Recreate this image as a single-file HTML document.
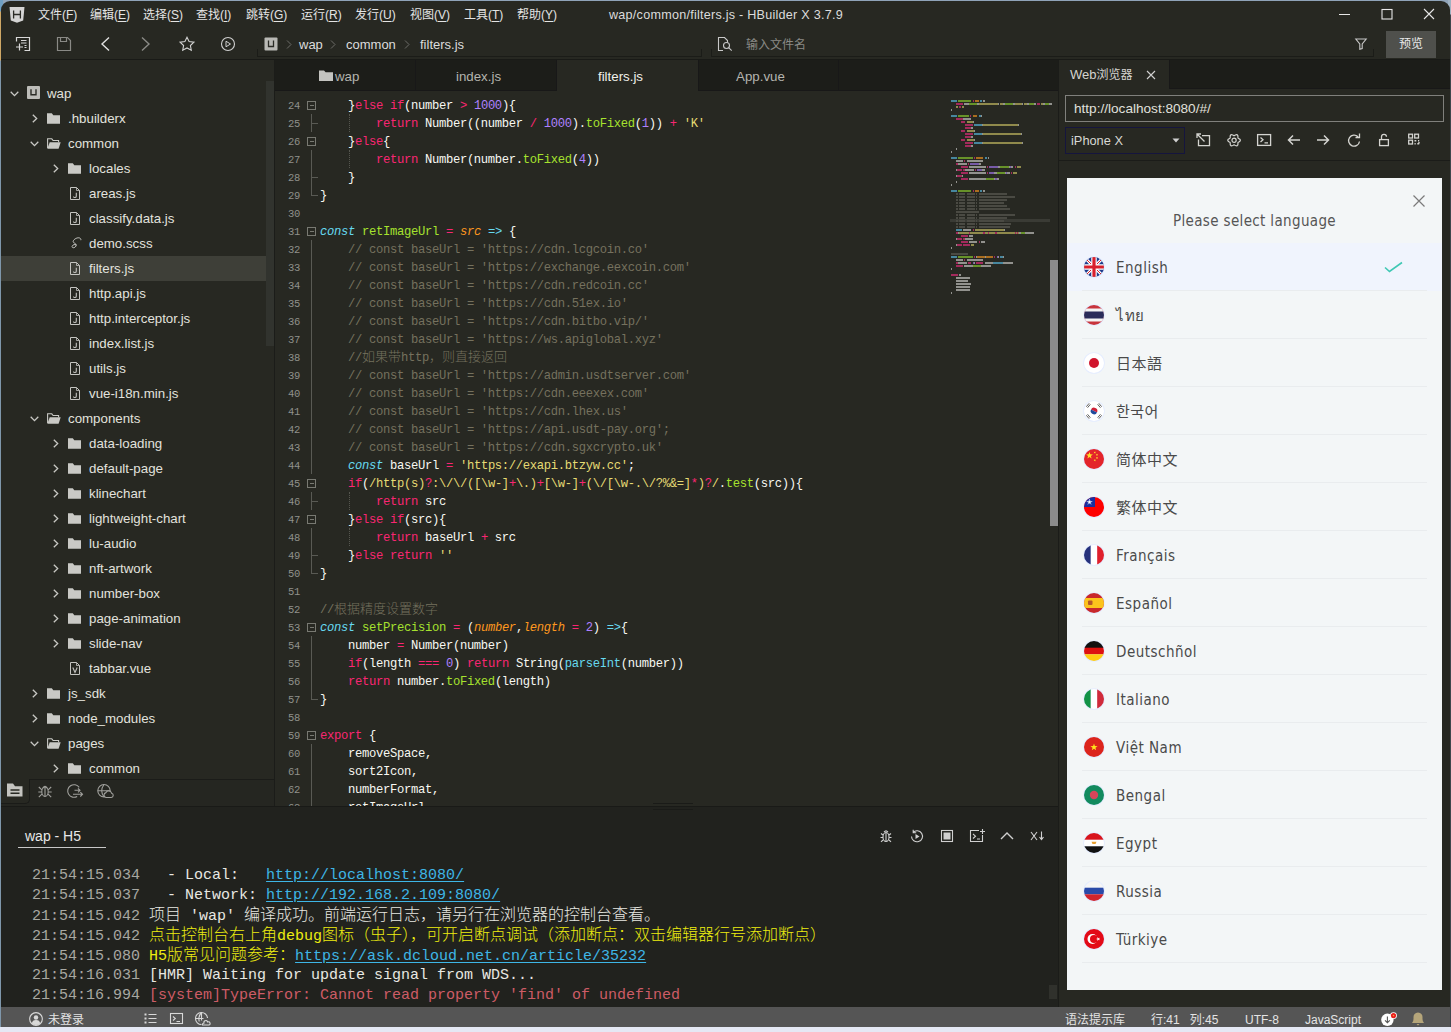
<!DOCTYPE html>
<html lang="zh">
<head>
<meta charset="utf-8">
<title>wap/common/filters.js - HBuilder X 3.7.9</title>
<style>
*{box-sizing:border-box;margin:0;padding:0}
html,body{width:1451px;height:1032px;overflow:hidden}
body{background:#e5e8f4;font-family:"Liberation Sans","Noto Sans CJK SC",sans-serif;font-size:13px;color:#e6e6e0;position:relative}
div,span,a{position:absolute;white-space:nowrap}
span span, a span, .ln span, .cl span, .co span, .tr span{position:static;white-space:inherit}
svg{position:absolute;overflow:visible}
#win{left:1px;top:1px;width:1449px;height:1026px;background:#272822;border-radius:9px 9px 0 0;overflow:hidden}
#pg{left:-1px;top:-1px;width:1451px;height:1032px}
.menu{top:7px;height:16px;line-height:16px;font-size:12px;color:#e4e4e4}
.menu u{text-underline-offset:2px}
.bc{top:37px;height:16px;line-height:16px;font-size:13px;color:#dcdcdc}
.bcs{top:36px;height:16px;line-height:16px;font-size:12px;color:#777}
.tab{top:61px;height:30px;line-height:31px;font-size:13.3px;color:#b4b4ae;text-align:center}
.tr{left:1px;width:265px;height:25px;line-height:25px;font-size:13.3px;color:#e2e2de}
.tr b{position:absolute;font-weight:normal;top:1px}
.ln{left:275px;width:25px;height:18px;line-height:18px;text-align:right;font-family:"Liberation Mono",monospace;font-size:10.5px;letter-spacing:-0.3px;color:#90918b}
.cl{left:320px;height:18px;line-height:18px;font-family:"Liberation Mono","Noto Sans CJK SC",monospace;font-size:12.2px;letter-spacing:-0.32px;color:#f8f8f2;white-space:pre}
.cl i{font-style:italic}
.k{color:#f92672}.f{color:#a6e22e}.c{color:#75715e}.n{color:#ae81ff}.s{color:#e6db74}.b{color:#66d9ef}.p{color:#fd971f}
.cj{font-size:13px;letter-spacing:0;font-weight:300}
.co{left:32px;height:20px;line-height:20px;font-family:"Liberation Mono","Noto Sans CJK SC",monospace;font-size:15px;color:#a8a8a2;white-space:pre}
.co .w{color:#e8e8e2}.co .y{color:#eded10}.co .r{color:#cd5c66}.co .l{color:#3eb6e6;text-decoration:underline;text-underline-offset:1.500px}
.co .z{font-size:16px;font-weight:300}
.lang{left:1116px;height:24px;line-height:24px;font-family:"DejaVu Sans Condensed","Liberation Sans","Noto Sans CJK SC",sans-serif;font-size:15px;color:#4a4a4a;letter-spacing:0.5px}
.dv{left:1082px;width:345px;height:1px;background:#e9ecee}
.st{top:1012px;height:16px;line-height:16px;font-size:12px;color:#e4e4e4}
</style>
</head>
<body>
<div style="left:0;top:0;width:1451px;height:12px;background:#8fa3b8"></div>
<div style="left:0;top:0;width:3px;height:1027px;background:linear-gradient(#6f9fc2 0,#6f9fc2 11px,#cfa866 12px,#cfa866 60px,#7f97ab 61px,#7f97ab 100%)"></div>
<div style="left:1448px;top:0;width:3px;height:1027px;background:linear-gradient(#9fb2c2 0,#9fb2c2 14px,#3f474d 15px,#3f474d 100%)"></div>
<div id="win"><div id="pg">
<!-- menu bar -->
<svg style="left:9px;top:6px" width="16" height="18" viewBox="0 0 16 18"><path d="M0.5 1h15l-1.3 13.6L8 16.8 1.8 14.6z" fill="#d4d4d4"/><path d="M4.6 4.5v8M11.4 4.5v8M4.6 8.5h6.8" stroke="#2a2b26" stroke-width="1.3" fill="none"/></svg>
<span class="menu" style="left:38px">文件(<u>F</u>)</span>
<span class="menu" style="left:90px">编辑(<u>E</u>)</span>
<span class="menu" style="left:143px">选择(<u>S</u>)</span>
<span class="menu" style="left:196px">查找(<u>I</u>)</span>
<span class="menu" style="left:246px">跳转(<u>G</u>)</span>
<span class="menu" style="left:301px">运行(<u>R</u>)</span>
<span class="menu" style="left:355px">发行(<u>U</u>)</span>
<span class="menu" style="left:410px">视图(<u>V</u>)</span>
<span class="menu" style="left:464px">工具(<u>T</u>)</span>
<span class="menu" style="left:517px">帮助(<u>Y</u>)</span>
<span class="menu" style="left:609px;color:#dcdcdc;font-size:12.6px;letter-spacing:0.25px">wap/common/filters.js - HBuilder X 3.7.9</span>
<svg style="left:1338px;top:8px" width="100" height="14" viewBox="0 0 100 14" fill="none" stroke="#e6e6e6" stroke-width="1.1"><path d="M1 6.5h11"/><rect x="44" y="1.5" width="10" height="9.5"/><path d="M86 1l10 10M96 1L86 11"/></svg>
<!-- toolbar -->
<svg style="left:14px;top:35px" width="230" height="18" viewBox="0 0 230 18" fill="none" stroke="#d8d8d8" stroke-width="1.2"><path d="M2.500 6.500V2.500h13v13h-5"/><path d="M7 5.500h5.500M7 8h5.500M10.500 10.500h2M10.500 12.500h2" stroke-width="1"/><path d="M2 12h7M5.5 8.5v7"/><g stroke="#8a8a86"><path d="M43.5 2.5h10l3 3v10h-13z"/><path d="M46.500 2.500v4h6v-4"/></g><path d="M95 2.500l-7 6.500 7 6.500" stroke="#e0e0e0" stroke-width="1.4"/><path d="M128 2.500l7 6.500-7 6.500" stroke="#8a8a86" stroke-width="1.4"/><path d="M173 2.200l2.100 4.400 4.800 0.600-3.500 3.300 0.900 4.800-4.300-2.400-4.300 2.400 0.900-4.800-3.500-3.300 4.800-0.600z" stroke="#d0d0d0" stroke-width="1.1"/><circle cx="214" cy="9" r="6.500" stroke="#d0d0d0" stroke-width="1.1"/><path d="M212 6.200l4.500 2.800-4.500 2.800z" stroke="#d0d0d0" stroke-width="1"/></svg>
<svg style="left:264px;top:37px" width="14" height="14" viewBox="0 0 14 14"><rect x="0.5" y="0.500" width="13" height="13" rx="1" fill="#b9b9b5"/><path d="M4.500 3.500v6h5v-6" stroke="#2a2b26" stroke-width="1.300" fill="none"/></svg>
<svg style="left:286px;top:40px" width="6" height="9" viewBox="0 0 6 9" fill="none" stroke="#6c6c68" stroke-width="1"><path d="M1 0.500l4 4-4 4"/></svg>
<svg style="left:330px;top:40px" width="6" height="9" viewBox="0 0 6 9" fill="none" stroke="#6c6c68" stroke-width="1"><path d="M1 0.500l4 4-4 4"/></svg>
<svg style="left:404px;top:40px" width="6" height="9" viewBox="0 0 6 9" fill="none" stroke="#6c6c68" stroke-width="1"><path d="M1 0.500l4 4-4 4"/></svg>
<span class="bc" style="left:299px">wap</span>
<span class="bc" style="left:346px">common</span>
<span class="bc" style="left:420px">filters.js</span>
<div style="left:257px;top:49px;width:445px;height:8px;border:1px solid #1b1c18;border-top:none"></div>
<div style="left:711px;top:49px;width:663px;height:8px;border:1px solid #1b1c18;border-top:none"></div>
<svg style="left:717px;top:36px" width="16" height="16" viewBox="0 0 16 16" fill="none" stroke="#c8c8c8" stroke-width="1.100"><path d="M6 14.500H1.500V1.500h6l3 3v2"/><circle cx="9.500" cy="9.500" r="3"/><path d="M11.700 11.700l3 3"/></svg>
<span class="bc" style="left:746px;color:#8a8a86;font-size:12px">输入文件名</span>
<svg style="left:1355px;top:38px" width="12" height="12" viewBox="0 0 12 12" fill="none" stroke="#c8c8c8" stroke-width="1.100"><path d="M0.800 1h10.400L7.200 6v4.500l-2.400 0.800V6z"/></svg>
<div style="left:1386px;top:31px;width:50px;height:27px;background:#4f504c;color:#eaeaea;font-size:12px;line-height:27px;text-align:center">预览</div>
<div style="left:0;top:59px;width:1451px;height:1px;background:#191a17"></div>
<!-- sidebar -->
<div style="left:266px;top:81px;width:8px;height:265px;background:#31332e"></div>
<div style="left:274px;top:60px;width:1px;height:747px;background:#1b1c19"></div>
<div style="left:1px;top:256px;width:265px;height:25px;background:#3e3f38"></div>
<div class="tr" style="top:80px"><svg style="left:9px;top:11px" width="9" height="6" viewBox="0 0 9 6" fill="none" stroke="#c8c8c4" stroke-width="1.300"><path d="M0.700 0.700l3.800 3.900 3.800-3.900"/></svg><svg style="left:26px;top:6px" width="13" height="13" viewBox="0 0 13 13"><rect x="0" y="0" width="13" height="13" rx="1" fill="#bdbdb9"/><path d="M4 3.200v5.600h5V3.200" stroke="#2a2b26" stroke-width="1.400" fill="none"/></svg><b style="left:46px">wap</b></div>
<div class="tr" style="top:105px"><svg style="left:31px;top:9px" width="6" height="9" viewBox="0 0 6 9" fill="none" stroke="#c8c8c4" stroke-width="1.300"><path d="M0.800 0.700l3.900 3.800-3.900 3.800"/></svg><svg style="left:46px;top:8px" width="13" height="11" viewBox="0 0 13 11"><path d="M0 0.300h4.800l1.500 1.900H13V10.700H0z" fill="#c9c9c5"/></svg><b style="left:67px">.hbuilderx</b></div>
<div class="tr" style="top:130px"><svg style="left:29px;top:11px" width="9" height="6" viewBox="0 0 9 6" fill="none" stroke="#c8c8c4" stroke-width="1.300"><path d="M0.700 0.700l3.800 3.900 3.800-3.900"/></svg><svg style="left:46px;top:8px" width="14" height="11" viewBox="0 0 14 11"><path d="M0.600 10V0.800h4.200l1.300 1.700h5.500v1.800" fill="none" stroke="#c9c9c5" stroke-width="1.100"/><path d="M2.700 4.300h11L11.600 10.700H0.300z" fill="#c9c9c5"/></svg><b style="left:67px">common</b></div>
<div class="tr" style="top:155px"><svg style="left:52px;top:9px" width="6" height="9" viewBox="0 0 6 9" fill="none" stroke="#c8c8c4" stroke-width="1.300"><path d="M0.800 0.700l3.900 3.800-3.900 3.800"/></svg><svg style="left:67px;top:8px" width="13" height="11" viewBox="0 0 13 11"><path d="M0 0.300h4.800l1.500 1.900H13V10.700H0z" fill="#c9c9c5"/></svg><b style="left:88px">locales</b></div>
<div class="tr" style="top:180px"><svg style="left:69px;top:7px" width="10" height="13" viewBox="0 0 10 13" fill="none" stroke="#c4c4c0" stroke-width="1"><path d="M0.500 0.500h6l3 3v9h-9z"/><path d="M6.500 0.500v3h3" stroke-width="0.800"/><path d="M6.300 5.800v3.400q0 1.300-1.400 1.300T3.500 9.400" stroke-width="1.100"/></svg><b style="left:88px">areas.js</b></div>
<div class="tr" style="top:205px"><svg style="left:69px;top:7px" width="10" height="13" viewBox="0 0 10 13" fill="none" stroke="#c4c4c0" stroke-width="1"><path d="M0.500 0.500h6l3 3v9h-9z"/><path d="M6.500 0.500v3h3" stroke-width="0.800"/><path d="M6.300 5.800v3.400q0 1.300-1.400 1.300T3.500 9.400" stroke-width="1.100"/></svg><b style="left:88px">classify.data.js</b></div>
<div class="tr" style="top:230px"><svg style="left:69px;top:6px" width="12" height="14" viewBox="0 0 12 14" fill="none" stroke="#c4c4c0" stroke-width="1"><path d="M10.800 4.200c0.600-2.200-2.200-3.200-5-1.700S2.200 6.200 4.600 7.200c2 0.900 2.200 2.600 0.500 3.900s-3.600 0.400-2.900-1 2.500-2 3.800-1.200"/></svg><b style="left:88px">demo.scss</b></div>
<div class="tr" style="top:255px"><svg style="left:69px;top:7px" width="10" height="13" viewBox="0 0 10 13" fill="none" stroke="#c4c4c0" stroke-width="1"><path d="M0.500 0.500h6l3 3v9h-9z"/><path d="M6.500 0.500v3h3" stroke-width="0.800"/><path d="M6.300 5.800v3.400q0 1.300-1.400 1.300T3.500 9.400" stroke-width="1.100"/></svg><b style="left:88px">filters.js</b></div>
<div class="tr" style="top:280px"><svg style="left:69px;top:7px" width="10" height="13" viewBox="0 0 10 13" fill="none" stroke="#c4c4c0" stroke-width="1"><path d="M0.500 0.500h6l3 3v9h-9z"/><path d="M6.500 0.500v3h3" stroke-width="0.800"/><path d="M6.300 5.800v3.400q0 1.300-1.400 1.300T3.500 9.400" stroke-width="1.100"/></svg><b style="left:88px">http.api.js</b></div>
<div class="tr" style="top:305px"><svg style="left:69px;top:7px" width="10" height="13" viewBox="0 0 10 13" fill="none" stroke="#c4c4c0" stroke-width="1"><path d="M0.500 0.500h6l3 3v9h-9z"/><path d="M6.500 0.500v3h3" stroke-width="0.800"/><path d="M6.300 5.800v3.400q0 1.300-1.400 1.300T3.500 9.400" stroke-width="1.100"/></svg><b style="left:88px">http.interceptor.js</b></div>
<div class="tr" style="top:330px"><svg style="left:69px;top:7px" width="10" height="13" viewBox="0 0 10 13" fill="none" stroke="#c4c4c0" stroke-width="1"><path d="M0.500 0.500h6l3 3v9h-9z"/><path d="M6.500 0.500v3h3" stroke-width="0.800"/><path d="M6.300 5.800v3.400q0 1.300-1.400 1.300T3.500 9.400" stroke-width="1.100"/></svg><b style="left:88px">index.list.js</b></div>
<div class="tr" style="top:355px"><svg style="left:69px;top:7px" width="10" height="13" viewBox="0 0 10 13" fill="none" stroke="#c4c4c0" stroke-width="1"><path d="M0.500 0.500h6l3 3v9h-9z"/><path d="M6.500 0.500v3h3" stroke-width="0.800"/><path d="M6.300 5.800v3.400q0 1.300-1.400 1.300T3.500 9.400" stroke-width="1.100"/></svg><b style="left:88px">utils.js</b></div>
<div class="tr" style="top:380px"><svg style="left:69px;top:7px" width="10" height="13" viewBox="0 0 10 13" fill="none" stroke="#c4c4c0" stroke-width="1"><path d="M0.500 0.500h6l3 3v9h-9z"/><path d="M6.500 0.500v3h3" stroke-width="0.800"/><path d="M6.300 5.800v3.400q0 1.300-1.400 1.300T3.500 9.400" stroke-width="1.100"/></svg><b style="left:88px">vue-i18n.min.js</b></div>
<div class="tr" style="top:405px"><svg style="left:29px;top:11px" width="9" height="6" viewBox="0 0 9 6" fill="none" stroke="#c8c8c4" stroke-width="1.300"><path d="M0.700 0.700l3.800 3.900 3.800-3.900"/></svg><svg style="left:46px;top:8px" width="14" height="11" viewBox="0 0 14 11"><path d="M0.600 10V0.800h4.200l1.300 1.700h5.500v1.800" fill="none" stroke="#c9c9c5" stroke-width="1.100"/><path d="M2.700 4.300h11L11.600 10.700H0.300z" fill="#c9c9c5"/></svg><b style="left:67px">components</b></div>
<div class="tr" style="top:430px"><svg style="left:52px;top:9px" width="6" height="9" viewBox="0 0 6 9" fill="none" stroke="#c8c8c4" stroke-width="1.300"><path d="M0.800 0.700l3.900 3.800-3.900 3.800"/></svg><svg style="left:67px;top:8px" width="13" height="11" viewBox="0 0 13 11"><path d="M0 0.300h4.800l1.500 1.900H13V10.700H0z" fill="#c9c9c5"/></svg><b style="left:88px">data-loading</b></div>
<div class="tr" style="top:455px"><svg style="left:52px;top:9px" width="6" height="9" viewBox="0 0 6 9" fill="none" stroke="#c8c8c4" stroke-width="1.300"><path d="M0.800 0.700l3.900 3.800-3.900 3.800"/></svg><svg style="left:67px;top:8px" width="13" height="11" viewBox="0 0 13 11"><path d="M0 0.300h4.800l1.500 1.900H13V10.700H0z" fill="#c9c9c5"/></svg><b style="left:88px">default-page</b></div>
<div class="tr" style="top:480px"><svg style="left:52px;top:9px" width="6" height="9" viewBox="0 0 6 9" fill="none" stroke="#c8c8c4" stroke-width="1.300"><path d="M0.800 0.700l3.900 3.800-3.900 3.800"/></svg><svg style="left:67px;top:8px" width="13" height="11" viewBox="0 0 13 11"><path d="M0 0.300h4.800l1.500 1.900H13V10.700H0z" fill="#c9c9c5"/></svg><b style="left:88px">klinechart</b></div>
<div class="tr" style="top:505px"><svg style="left:52px;top:9px" width="6" height="9" viewBox="0 0 6 9" fill="none" stroke="#c8c8c4" stroke-width="1.300"><path d="M0.800 0.700l3.900 3.800-3.900 3.800"/></svg><svg style="left:67px;top:8px" width="13" height="11" viewBox="0 0 13 11"><path d="M0 0.300h4.800l1.500 1.900H13V10.700H0z" fill="#c9c9c5"/></svg><b style="left:88px">lightweight-chart</b></div>
<div class="tr" style="top:530px"><svg style="left:52px;top:9px" width="6" height="9" viewBox="0 0 6 9" fill="none" stroke="#c8c8c4" stroke-width="1.300"><path d="M0.800 0.700l3.900 3.800-3.900 3.800"/></svg><svg style="left:67px;top:8px" width="13" height="11" viewBox="0 0 13 11"><path d="M0 0.300h4.800l1.500 1.900H13V10.700H0z" fill="#c9c9c5"/></svg><b style="left:88px">lu-audio</b></div>
<div class="tr" style="top:555px"><svg style="left:52px;top:9px" width="6" height="9" viewBox="0 0 6 9" fill="none" stroke="#c8c8c4" stroke-width="1.300"><path d="M0.800 0.700l3.900 3.800-3.900 3.800"/></svg><svg style="left:67px;top:8px" width="13" height="11" viewBox="0 0 13 11"><path d="M0 0.300h4.800l1.500 1.900H13V10.700H0z" fill="#c9c9c5"/></svg><b style="left:88px">nft-artwork</b></div>
<div class="tr" style="top:580px"><svg style="left:52px;top:9px" width="6" height="9" viewBox="0 0 6 9" fill="none" stroke="#c8c8c4" stroke-width="1.300"><path d="M0.800 0.700l3.900 3.800-3.900 3.800"/></svg><svg style="left:67px;top:8px" width="13" height="11" viewBox="0 0 13 11"><path d="M0 0.300h4.800l1.500 1.900H13V10.700H0z" fill="#c9c9c5"/></svg><b style="left:88px">number-box</b></div>
<div class="tr" style="top:605px"><svg style="left:52px;top:9px" width="6" height="9" viewBox="0 0 6 9" fill="none" stroke="#c8c8c4" stroke-width="1.300"><path d="M0.800 0.700l3.900 3.800-3.900 3.800"/></svg><svg style="left:67px;top:8px" width="13" height="11" viewBox="0 0 13 11"><path d="M0 0.300h4.800l1.500 1.900H13V10.700H0z" fill="#c9c9c5"/></svg><b style="left:88px">page-animation</b></div>
<div class="tr" style="top:630px"><svg style="left:52px;top:9px" width="6" height="9" viewBox="0 0 6 9" fill="none" stroke="#c8c8c4" stroke-width="1.300"><path d="M0.800 0.700l3.900 3.800-3.900 3.800"/></svg><svg style="left:67px;top:8px" width="13" height="11" viewBox="0 0 13 11"><path d="M0 0.300h4.800l1.500 1.900H13V10.700H0z" fill="#c9c9c5"/></svg><b style="left:88px">slide-nav</b></div>
<div class="tr" style="top:655px"><svg style="left:69px;top:7px" width="10" height="13" viewBox="0 0 10 13" fill="none" stroke="#c4c4c0" stroke-width="1"><path d="M0.500 0.500h6l3 3v9h-9z"/><path d="M6.500 0.500v3h3" stroke-width="0.800"/><path d="M2.800 5.500l2.200 5 2.200-5" stroke-width="1.100"/></svg><b style="left:88px">tabbar.vue</b></div>
<div class="tr" style="top:680px"><svg style="left:31px;top:9px" width="6" height="9" viewBox="0 0 6 9" fill="none" stroke="#c8c8c4" stroke-width="1.300"><path d="M0.800 0.700l3.900 3.800-3.900 3.800"/></svg><svg style="left:46px;top:8px" width="13" height="11" viewBox="0 0 13 11"><path d="M0 0.300h4.800l1.500 1.900H13V10.700H0z" fill="#c9c9c5"/></svg><b style="left:67px">js_sdk</b></div>
<div class="tr" style="top:705px"><svg style="left:31px;top:9px" width="6" height="9" viewBox="0 0 6 9" fill="none" stroke="#c8c8c4" stroke-width="1.300"><path d="M0.800 0.700l3.900 3.800-3.900 3.800"/></svg><svg style="left:46px;top:8px" width="13" height="11" viewBox="0 0 13 11"><path d="M0 0.300h4.800l1.500 1.900H13V10.700H0z" fill="#c9c9c5"/></svg><b style="left:67px">node_modules</b></div>
<div class="tr" style="top:730px"><svg style="left:29px;top:11px" width="9" height="6" viewBox="0 0 9 6" fill="none" stroke="#c8c8c4" stroke-width="1.300"><path d="M0.700 0.700l3.800 3.900 3.800-3.900"/></svg><svg style="left:46px;top:8px" width="14" height="11" viewBox="0 0 14 11"><path d="M0.600 10V0.800h4.200l1.300 1.700h5.500v1.800" fill="none" stroke="#c9c9c5" stroke-width="1.100"/><path d="M2.700 4.300h11L11.600 10.700H0.300z" fill="#c9c9c5"/></svg><b style="left:67px">pages</b></div>
<div class="tr" style="top:755px"><svg style="left:52px;top:9px" width="6" height="9" viewBox="0 0 6 9" fill="none" stroke="#c8c8c4" stroke-width="1.300"><path d="M0.800 0.700l3.900 3.800-3.900 3.800"/></svg><svg style="left:67px;top:8px" width="13" height="11" viewBox="0 0 13 11"><path d="M0 0.300h4.800l1.500 1.900H13V10.700H0z" fill="#c9c9c5"/></svg><b style="left:88px">common</b></div>
<div style="left:1px;top:779px;width:273px;height:27px;background:#252621;border-top:1px solid #1b1c19"></div>
<div style="left:1px;top:779px;width:29px;height:25px;background:#272822;border-right:1px solid #1a1b18;border-bottom:1px solid #1a1b18;border-radius:0 0 5px 0"></div>
<svg style="left:6px;top:783px" width="120" height="16" viewBox="0 0 120 16" fill="none" stroke="#a0a09c" stroke-width="1.1"><path d="M1 0.500h6l2 2.800h7.500V13.500H1z" fill="#c4c4c0" stroke="none"/><path d="M4.500 7h9M4.500 10.300h9" stroke="#272822" stroke-width="1.600"/><g transform="translate(32,1)"><ellipse cx="7" cy="7.700" rx="3.200" ry="4.700"/><path d="M7 3v9.300M4.800 4.200Q7 0.300 9.200 4.200M3.900 5.800L0.800 3M10.100 5.800l3.100-2.800M3.800 8H0.300M10.200 8h3.500M3.900 10.200L0.800 13.200M10.100 10.200l3.100 3"/></g><g transform="translate(61,1)"><path d="M12.160 3.390A6.300 6.300 0 1 0 10.150 12.460"/><path d="M7.500 6.300h5.500M11 4.300l2 2-2 2M6 10.300h9.500M13.300 8.100l2.200 2.200-2.200 2.200"/></g><g transform="translate(91,1)"><circle cx="7" cy="6.700" r="6.200"/><path d="M0.800 6.700h12.400M7 0.500Q2.500 6.700 7 12.900"/><path d="M9 13.500h5.300a2.200 2.200 0 0 0 0.300-4.300a3 3 0 0 0-5.600-0.600a2.500 2.500 0 0 0 0 4.900z" fill="#252621"/></g></svg>
<!-- editor -->
<div style="left:275px;top:60px;width:783px;height:31px;background:#1c1d19;border-bottom:1px solid #181818"></div>
<div style="left:557px;top:60px;width:141px;height:31px;background:#272822"></div>
<div style="left:415px;top:60px;width:1px;height:30px;background:#181818"></div>
<div style="left:556px;top:60px;width:1px;height:30px;background:#181818"></div>
<div style="left:698px;top:60px;width:1px;height:30px;background:#181818"></div>
<div style="left:838px;top:60px;width:1px;height:30px;background:#181818"></div>
<svg style="left:319px;top:70px" width="14" height="11" viewBox="0 0 14 11"><path d="M0 0.500h5l1.600 1.800H14V11H0z" fill="#c4c4c0"/></svg>
<div class="tab" style="left:335px;text-align:left">wap</div>
<div class="tab" style="left:408px;width:141px">index.js</div>
<div class="tab" style="left:550px;width:141px;color:#f0f0ea">filters.js</div>
<div class="tab" style="left:690px;width:141px">App.vue</div>
<div style="left:1058px;top:60px;width:1px;height:947px;background:#1b1c19"></div>
<div style="left:275px;top:91px;width:783px;height:715px;overflow:hidden;position:absolute"><div style="left:-275px;top:-91px;width:1451px;height:1032px">
<div class="ln" style="top:97px">24</div><div class="cl" style="top:97px">    }<span class="k">else if</span>(number <span class="k">&gt;</span> <span class="n">1000</span>){</div>
<div class="ln" style="top:115px">25</div><div class="cl" style="top:115px">        <span class="k">return</span> Number((number <span class="k">/</span> <span class="n">1000</span>).<span class="f">toFixed</span>(<span class="n">1</span>)) <span class="k">+</span> <span class="s">'K'</span></div>
<div class="ln" style="top:133px">26</div><div class="cl" style="top:133px">    }<span class="k">else</span>{</div>
<div class="ln" style="top:151px">27</div><div class="cl" style="top:151px">        <span class="k">return</span> Number(number.<span class="f">toFixed</span>(<span class="n">4</span>))</div>
<div class="ln" style="top:169px">28</div><div class="cl" style="top:169px">    }</div>
<div class="ln" style="top:187px">29</div><div class="cl" style="top:187px">}</div>
<div class="ln" style="top:205px">30</div><div class="cl" style="top:205px"></div>
<div class="ln" style="top:223px">31</div><div class="cl" style="top:223px"><span class="b"><i>const</i></span> <span class="f">retImageUrl</span> <span class="k">=</span> <span class="p"><i>src</i></span> <span class="b"><i>=&gt;</i></span> {</div>
<div class="ln" style="top:241px">32</div><div class="cl" style="top:241px">    <span class="c">// const baseUrl = 'https://cdn.lcgcoin.co'</span></div>
<div class="ln" style="top:259px">33</div><div class="cl" style="top:259px">    <span class="c">// const baseUrl = 'https://exchange.eexcoin.com'</span></div>
<div class="ln" style="top:277px">34</div><div class="cl" style="top:277px">    <span class="c">// const baseUrl = 'https://cdn.redcoin.cc'</span></div>
<div class="ln" style="top:295px">35</div><div class="cl" style="top:295px">    <span class="c">// const baseUrl = 'https://cdn.51ex.io'</span></div>
<div class="ln" style="top:313px">36</div><div class="cl" style="top:313px">    <span class="c">// const baseUrl = 'https://cdn.bitbo.vip/'</span></div>
<div class="ln" style="top:331px">37</div><div class="cl" style="top:331px">    <span class="c">// const baseUrl = 'https://ws.apiglobal.xyz'</span></div>
<div class="ln" style="top:349px">38</div><div class="cl" style="top:349px">    <span class="c">//<span class="cj">如果带</span>http<span class="cj">，则直接返回</span></span></div>
<div class="ln" style="top:367px">39</div><div class="cl" style="top:367px">    <span class="c">// const baseUrl = 'https://admin.usdtserver.com'</span></div>
<div class="ln" style="top:385px">40</div><div class="cl" style="top:385px">    <span class="c">// const baseUrl = 'https://cdn.eeexex.com'</span></div>
<div class="ln" style="top:403px">41</div><div class="cl" style="top:403px">    <span class="c">// const baseUrl = 'https://cdn.lhex.us'</span></div>
<div class="ln" style="top:421px">42</div><div class="cl" style="top:421px">    <span class="c">// const baseUrl = 'https://api.usdt-pay.org';</span></div>
<div class="ln" style="top:439px">43</div><div class="cl" style="top:439px">    <span class="c">// const baseUrl = 'https://cdn.sgxcrypto.uk'</span></div>
<div class="ln" style="top:457px">44</div><div class="cl" style="top:457px">    <span class="b"><i>const</i></span> baseUrl <span class="k">=</span> <span class="s">'https://exapi.btzyw.cc'</span>;</div>
<div class="ln" style="top:475px">45</div><div class="cl" style="top:475px">    <span class="k">if</span>(<span class="s">/http(s)</span><span class="k">?</span><span class="s">:\/\/([\w-]</span><span class="k">+</span><span class="s">\.)</span><span class="k">+</span><span class="s">[\w-]</span><span class="k">+</span><span class="s">(\/[\w-.\/?%&amp;=]</span><span class="k">*</span><span class="s">)</span><span class="k">?</span><span class="s">/</span>.<span class="f">test</span>(src)){</div>
<div class="ln" style="top:493px">46</div><div class="cl" style="top:493px">        <span class="k">return</span> src</div>
<div class="ln" style="top:511px">47</div><div class="cl" style="top:511px">    }<span class="k">else if</span>(src){</div>
<div class="ln" style="top:529px">48</div><div class="cl" style="top:529px">        <span class="k">return</span> baseUrl <span class="k">+</span> src</div>
<div class="ln" style="top:547px">49</div><div class="cl" style="top:547px">    }<span class="k">else return</span> <span class="s">''</span></div>
<div class="ln" style="top:565px">50</div><div class="cl" style="top:565px">}</div>
<div class="ln" style="top:583px">51</div><div class="cl" style="top:583px"></div>
<div class="ln" style="top:601px">52</div><div class="cl" style="top:601px"><span class="c">//<span class="cj">根据精度设置数字</span></span></div>
<div class="ln" style="top:619px">53</div><div class="cl" style="top:619px"><span class="b"><i>const</i></span> <span class="f">setPrecision</span> <span class="k">=</span> (<span class="p"><i>number</i></span>,<span class="p"><i>length</i></span> <span class="k">=</span> <span class="n">2</span>) <span class="b"><i>=&gt;</i></span>{</div>
<div class="ln" style="top:637px">54</div><div class="cl" style="top:637px">    number <span class="k">=</span> Number(number)</div>
<div class="ln" style="top:655px">55</div><div class="cl" style="top:655px">    <span class="k">if</span>(length <span class="k">===</span> <span class="n">0</span>) <span class="k">return</span> String(<span class="b">parseInt</span>(number))</div>
<div class="ln" style="top:673px">56</div><div class="cl" style="top:673px">    <span class="k">return</span> number.<span class="f">toFixed</span>(length)</div>
<div class="ln" style="top:691px">57</div><div class="cl" style="top:691px">}</div>
<div class="ln" style="top:709px">58</div><div class="cl" style="top:709px"></div>
<div class="ln" style="top:727px">59</div><div class="cl" style="top:727px"><span class="k">export</span> {</div>
<div class="ln" style="top:745px">60</div><div class="cl" style="top:745px">    removeSpace,</div>
<div class="ln" style="top:763px">61</div><div class="cl" style="top:763px">    sort2Icon,</div>
<div class="ln" style="top:781px">62</div><div class="cl" style="top:781px">    numberFormat,</div>
<div class="ln" style="top:799px">63</div><div class="cl" style="top:799px">    retImageUrl,</div>
<svg style="left:0;top:0" width="1451" height="1032" viewBox="0 0 1451 1032" fill="none" stroke="#595a54" stroke-width="1" shape-rendering="crispEdges"><path d="M311.500 150v18M311.500 240v18M311.500 258v18M311.500 276v18M311.500 294v18M311.500 312v18M311.500 330v18M311.500 348v18M311.500 366v18M311.500 384v18M311.500 402v18M311.500 420v18M311.500 438v18M311.500 456v18M311.500 528v18M311.500 636v18M311.500 654v18M311.500 672v18M311.500 744v18M311.500 762v18M311.500 780v18M311.500 798v18M311.500 114v18M311.500 168v18M311.500 492v18M311.500 546v18M311.500 123.5h6M311.500 177.5h6M311.500 501.5h6M311.500 555.5h6M311.500 186v9.500h6M311.500 564v9.500h6M311.500 690v9.500h6"/><path stroke="#787972" d="M307.500 101.5h8v8h-8zM309.500 105.5h4M307.500 137.5h8v8h-8zM309.500 141.5h4M307.500 227.5h8v8h-8zM309.500 231.5h4M307.500 479.5h8v8h-8zM309.500 483.5h4M307.500 515.5h8v8h-8zM309.500 519.5h4M307.500 623.5h8v8h-8zM309.500 627.5h4M307.500 731.5h8v8h-8zM309.500 735.5h4"/></svg>
<div style="left:349px;top:114px;width:1px;height:18px;border-left:1px dotted #55564f"></div>
<div style="left:349px;top:150px;width:1px;height:18px;border-left:1px dotted #55564f"></div>
<div style="left:349px;top:492px;width:1px;height:18px;border-left:1px dotted #55564f"></div>
<div style="left:349px;top:528px;width:1px;height:18px;border-left:1px dotted #55564f"></div>
</div></div>
<!--HANDLE-->
<div style="left:1050px;top:260px;width:8px;height:266px;background:#8b8b8b"></div>
<svg style="left:0;top:0" width="1451" height="1032" viewBox="0 0 1451 1032" fill="none" stroke-width="2" shape-rendering="crispEdges"><rect x="950" y="219" width="100" height="3" fill="#3a3b35"/><path stroke="#92928e" d="M983.4 101h1.2M964.2 104h4.8M977.4 104h1.2M997.8 104h1.2M1002.6 104h2.4M1013.4 104h1.2M1021.8 104h1.2M1026.6 104h2.4M1033.8 104h2.4M1043.4 104h1.2M1049.4 104h2.4M951 110h1.2M981 116h1.2M963 119h8.4M972.6 122h1.2M982.2 125h1.2M1018.2 125h1.2M971.4 128h1.2M973.8 131h1.2M982.2 134h1.2M1020.6 134h1.2M971.4 137h1.2M973.8 140h1.2M982.2 143h1.2M1021.8 143h1.2M971.4 146h1.2M955.8 149h1.2M951 152h1.2M988.2 158h1.2M955.8 161h7.2M966.6 161h16.8M958.2 164h8.4M978.6 164h2.4M969 167h16.8M997.8 167h2.4M1008.6 167h1.2M1011 167h2.4M955.8 170h1.2M965.4 170h8.4M982.2 170h2.4M969 173h16.8M994.2 173h2.4M1005 173h1.2M1007.4 173h2.4M955.8 176h1.2M961.8 176h1.2M969 179h16.8M994.2 179h1.2M996.6 179h2.4M955.8 182h1.2M951 185h1.2M983.4 191h1.2M963 230h8.4M1003.8 230h1.2M958.2 233h1.2M1019.4 233h1.2M1025.4 233h8.4M969 236h3.6M955.8 239h1.2M965.4 239h7.2M969 242h8.4M981 242h3.6M955.8 245h1.2M951 248h1.2M976.2 257h1.2M984.6 257h1.2M997.8 257h1.2M1002.6 257h1.2M955.8 260h7.2M966.6 260h16.8M958.2 263h8.4M973.8 263h1.2M984.6 263h8.4M1002.6 263h10.8M964.2 266h8.4M981 266h9.6M951 269h1.2M959.4 275h1.2M955.8 278h14.4M955.8 281h12M955.8 284h15.6M955.8 287h14.4M955.8 290h14.4M951 293h1.2"/><path stroke="#a32a5c" d="M972.6 101h1.2M955.8 104h7.2M1037.4 104h2.4M959.4 107h1.2M970.2 116h1.2M955.8 119h7.2M960.6 122h4.8M965.4 125h7.2M965.4 128h6M960.6 131h4.8M965.4 134h7.2M965.4 137h6M960.6 140h4.8M965.4 143h7.2M965.4 146h6M973.8 158h1.2M964.2 161h1.2M955.8 164h2.4M967.8 164h1.2M960.6 167h7.2M987 167h1.2M1014.6 167h1.2M957 170h4.8M963 170h2.4M975 170h1.2M960.6 173h7.2M987 173h1.2M1011 173h1.2M957 176h4.8M960.6 179h7.2M972.6 191h1.2M972.6 230h1.2M955.8 233h2.4M969 233h1.2M983.4 233h1.2M988.2 233h1.2M995.4 233h1.2M1014.6 233h1.2M1017 233h1.2M960.6 236h7.2M957 239h4.8M963 239h2.4M960.6 242h7.2M978.6 242h1.2M957 245h4.8M963 245h7.2M973.8 257h1.2M994.2 257h1.2M964.2 260h1.2M955.8 263h2.4M967.8 263h3.6M976.2 263h7.2M955.8 266h7.2M951 275h7.2"/><path stroke="#679229" d="M958.2 101h13.2M969 104h8.4M1005 104h8.4M1029 104h4.8M1044.6 104h4.8M958.2 116h10.8M958.2 158h14.4M1000.2 167h8.4M996.6 173h8.4M985.8 179h8.4M958.2 191h13.2M1020.6 233h4.8M958.2 257h14.4M972.6 266h8.4"/><path stroke="#4a4a43" d="M955.8 194h2.4M959.4 194h6M966.6 194h8.4M976.2 194h1.2M978.6 194h28.8M955.8 197h2.4M959.4 197h6M966.6 197h8.4M976.2 197h1.2M978.6 197h36M955.8 200h2.4M959.4 200h6M966.6 200h8.4M976.2 200h1.2M978.6 200h28.8M955.8 203h2.4M959.4 203h6M966.6 203h8.4M976.2 203h1.2M978.6 203h25.2M955.8 206h2.4M959.4 206h6M966.6 206h8.4M976.2 206h1.2M978.6 206h28.8M955.8 209h2.4M959.4 209h6M966.6 209h8.4M976.2 209h1.2M978.6 209h31.2M955.8 212h23.4M955.8 215h2.4M959.4 215h6M966.6 215h8.4M976.2 215h1.2M978.6 215h36M955.8 218h2.4M959.4 218h6M966.6 218h8.4M976.2 218h1.2M978.6 218h28.8M955.8 221h2.4M959.4 221h6M966.6 221h8.4M976.2 221h1.2M978.6 221h25.2M955.8 224h2.4M959.4 224h6M966.6 224h8.4M976.2 224h1.2M978.6 224h32.4M955.8 227h2.4M959.4 227h6M966.6 227h8.4M976.2 227h1.2M978.6 227h31.2M951 254h16.8"/><path stroke="#775aa8" d="M970.2 164h8.4M989.4 167h8.4M1009.8 167h1.2M977.4 170h4.8M989.4 173h4.8M1006.2 173h1.2M995.4 179h1.2M996.6 257h1.2M972.6 263h1.2"/><path stroke="#908a4c" d="M978.6 104h19.2M1000.2 104h2.4M1014.6 104h7.2M1024.2 104h2.4M1041 104h2.4M955.8 107h2.4M961.8 107h2.4M966.6 122h6M983.4 125h34.8M966.6 131h7.2M983.4 134h37.2M966.6 140h7.2M983.4 143h38.4M1017 167h3.6M1013.4 173h3.6M975 230h28.8M959.4 233h9.6M970.2 233h13.2M984.6 233h3.6M989.4 233h6M996.6 233h18M1015.8 233h1.2M1018.2 233h1.2M971.4 245h2.4"/><path stroke="#47879f" d="M951 101h6M979.8 101h2.4M951 116h6M978.6 116h2.4M973.8 125h8.4M973.8 134h8.4M973.8 143h8.4M951 158h6M984.6 158h2.4M951 191h6M979.8 191h2.4M955.8 230h6M951 257h6M1000.2 257h2.4M993 263h9.6"/><path stroke="#aa6e1f" d="M975 101h3.6M972.6 116h4.8M976.2 158h7.2M975 191h3.6M977.4 257h7.2M985.8 257h7.2"/></svg>
<!-- console -->
<div style="left:1px;top:806px;width:1057px;height:201px;background:#21221e;border-top:1px solid #191a17"></div>
<div style="left:653px;top:803px;width:40px;height:1px;background:#1a1b18"></div><div style="left:653px;top:809px;width:40px;height:1px;background:#1a1b18"></div>
<span style="left:25px;top:828px;height:16px;line-height:16px;font-size:14px;color:#e8e8e8">wap - H5</span>
<div style="left:18px;top:847px;width:88px;height:1px;background:#c8c8c8"></div>
<svg style="left:878px;top:828px" width="170" height="16" viewBox="0 0 170 16" fill="none" stroke="#d0d0d0" stroke-width="1.100"><g transform="translate(1,1)"><ellipse cx="7" cy="8" rx="3" ry="4.500"/><path d="M7 3.500v9M5 3.200Q7 0.500 9 3.200M4 6L2 4.500M10 6l2-1.500M4 8.500H1.500M10 8.500h2.500M4 11l-2 1.800M10 11l2 1.800"/></g><g transform="translate(32,1)"><path d="M3 3.500A5.500 5.500 0 1 1 1.500 7.500M3.200 0.800v3h3"/><path d="M5.500 5l4 2.500-4 2.500z" fill="#d0d0d0" stroke="none"/></g><g transform="translate(63,2)"><rect x="0.500" y="0.500" width="11" height="11"/><rect x="2.500" y="2.500" width="7" height="7" fill="#d0d0d0" stroke="none"/></g><g transform="translate(92,1)"><path d="M9 1.500H0.500v11h12V6"/><path d="M3 5l2.500 2.200L3 9.500M7 10h3M12.500 0v5M10 2.500h5"/></g><path d="M123 11l6-6 6 6" stroke-width="1.400"/><path d="M153 4l6 8M159 4l-6 8M163.500 3.500v8M161.500 9l2 2.500 2-2.500"/></svg>
<div class="co" style="top:866px">21:54:15.034 <span class='w'>  - Local:   </span><span class="l">http://localhost:8080/</span></div>
<div class="co" style="top:886px">21:54:15.037 <span class='w'>  - Network: </span><span class="l">http://192.168.2.109:8080/</span></div>
<div class="co" style="top:906px">21:54:15.042 <span class='w'><span class="z">项目</span> 'wap' <span class="z">编译成功。前端运行日志，请另行在浏览器的控制台查看。</span></span></div>
<div class="co" style="top:926px">21:54:15.042 <span class='y'><span class="z">点击控制台右上角</span>debug<span class="z">图标（虫子），可开启断点调试（添加断点：双击编辑器行号添加断点）</span></span></div>
<div class="co" style="top:946px">21:54:15.080 <span class='y'>H5<span class="z">版常见问题参考：</span></span><span class="l">https://ask.dcloud.net.cn/article/35232</span></div>
<div class="co" style="top:966px">21:54:16.031 <span class='w'>[HMR] Waiting for update signal from WDS...</span></div>
<div class="co" style="top:986px">21:54:16.994 <span class='r'>[system]TypeError: Cannot read property 'find' of undefined</span></div>
<div style="left:1049px;top:985px;width:8px;height:14px;background:#30312c"></div>
<!-- web browser panel -->
<div style="left:1059px;top:60px;width:392px;height:29px;background:#1c1d19;border-bottom:1px solid #181818"></div>
<div style="left:1059px;top:60px;width:111px;height:29px;background:#272822;border-right:1px solid #181818"></div>
<span style="left:1070px;top:67px;height:16px;line-height:16px;font-size:13px;color:#d4d4d0">Web<span style="font-size:12px">浏览器</span></span>
<svg style="left:1146px;top:70px" width="10" height="10" viewBox="0 0 10 10" fill="none" stroke="#d0d0d0" stroke-width="1.100"><path d="M1 1l8 8M9 1L1 9"/></svg>
<div style="left:1065px;top:95px;width:379px;height:27px;border:1px solid #80807c"></div>
<span style="left:1074px;top:101px;height:16px;line-height:16px;font-size:13.6px;color:#e0e0dc">http://localhost:8080/#/</span>
<div style="left:1065px;top:127px;width:120px;height:27px;border:1px solid #15153e"></div>
<span style="left:1071px;top:133px;height:16px;line-height:16px;font-size:12.800px;color:#d8d8d4">iPhone X</span>
<svg style="left:1172px;top:138px" width="8" height="5" viewBox="0 0 8 5"><path d="M0.500 0.500h7L4 4.500z" fill="#d0d0d0"/></svg>
<svg style="left:1195px;top:132px" width="232" height="16" viewBox="0 0 232 16" fill="none" stroke="#d4d4d0" stroke-width="1.3"><path d="M7 3.600h7.500v10h-11V7.500"/><path d="M2 2l7.500 7.500M2 6V2h4"/><g transform="translate(31.700,0.900) scale(0.920)"><circle cx="8" cy="8" r="2.300"/><path d="M14.8 8.0L14.7 8.6L14.3 9.1L13.7 9.5L13.1 9.9L12.6 10.2L12.3 10.5L12.2 10.9L12.2 11.5L12.2 12.2L12.1 12.9L11.8 13.5L11.4 13.9L10.8 14.1L10.2 14.0L9.5 13.7L8.9 13.4L8.4 13.1L8.0 13.0L7.6 13.1L7.1 13.4L6.5 13.7L5.8 14.0L5.2 14.1L4.6 13.9L4.2 13.5L3.9 12.9L3.8 12.2L3.8 11.5L3.8 10.9L3.7 10.5L3.4 10.2L2.9 9.9L2.3 9.5L1.7 9.1L1.3 8.6L1.2 8.0L1.3 7.4L1.7 6.9L2.3 6.5L2.9 6.1L3.4 5.8L3.7 5.5L3.8 5.1L3.8 4.5L3.8 3.8L3.9 3.1L4.2 2.5L4.6 2.1L5.2 1.9L5.8 2.0L6.5 2.3L7.1 2.6L7.6 2.9L8.0 3.0L8.4 2.9L8.9 2.6L9.5 2.3L10.2 2.0L10.8 1.9L11.4 2.1L11.8 2.5L12.1 3.1L12.2 3.8L12.2 4.5L12.2 5.1L12.3 5.5L12.6 5.8L13.1 6.1L13.7 6.5L14.3 6.9L14.7 7.4z"/></g><g transform="translate(61,0)"><rect x="1.600" y="2.600" width="13" height="10.800"/><path d="M4.500 5.500l2.500 2.200-2.500 2.200M8.500 10.800h3.500"/></g><path d="M105 8H93.500M98 3.500L93.500 8l4.500 4.500" stroke-width="1.500"/><path d="M122 8h11.500M129 3.500L133.500 8l-4.500 4.500" stroke-width="1.500"/><path d="M163 4.800A5.500 5.500 0 1 0 164.500 9.500M164.500 1.500v4h-4"/><g transform="translate(182,0)"><rect x="2.600" y="7.600" width="8.800" height="6"/><path d="M4.500 7.500V5a2.500 2.500 0 0 1 5-0.300"/></g><g transform="translate(213,1.500)"><rect x="0.700" y="0.700" width="3.800" height="3.800"/><rect x="6.700" y="0.700" width="3.800" height="3.800"/><rect x="0.700" y="6.700" width="3.800" height="3.800"/><path d="M6.500 7.200h1.800M10 7.200h1.200M6.500 10.300h1.200M9.300 10.300h1.900M11 8.500v1.500" stroke-width="1.400"/></g></svg>
<div style="left:1059px;top:160px;width:392px;height:1px;background:#1b1c19"></div>
<div style="left:1067px;top:178px;width:375px;height:812px;background:#f3f6f7"></div>
<div style="left:1067px;top:243px;width:375px;height:48px;background:#f0f4fd"></div>
<svg style="left:1413px;top:195px" width="12" height="12" viewBox="0 0 12 12" fill="none" stroke="#7a7a7a" stroke-width="1.200"><path d="M0.500 0.500l11 11M11.500 0.500l-11 11"/></svg>
<span class="lang" style="left:1067px;width:375px;text-align:center;top:209px;color:#555;letter-spacing:0.35px">Please select language</span>
<svg style="left:1384px;top:261px" width="19" height="12" viewBox="0 0 19 12" fill="none" stroke="#3fc8b4" stroke-width="1.600"><path d="M1 6.500l4.500 4L18 1.500"/></svg>
<span class="lang" style="top:256px">English</span>
<div class="dv" style="top:290px"></div>
<span class="lang" style="top:304px">ไทย</span>
<div class="dv" style="top:338px"></div>
<span class="lang" style="top:352px;font-family:'Liberation Sans','Noto Sans CJK JP',sans-serif">日本語</span>
<div class="dv" style="top:386px"></div>
<span class="lang" style="top:400px;font-family:'Liberation Sans','Noto Sans CJK KR',sans-serif">한국어</span>
<div class="dv" style="top:434px"></div>
<span class="lang" style="top:448px">简体中文</span>
<div class="dv" style="top:482px"></div>
<span class="lang" style="top:496px">繁体中文</span>
<div class="dv" style="top:530px"></div>
<span class="lang" style="top:544px">Français</span>
<div class="dv" style="top:578px"></div>
<span class="lang" style="top:592px">Español</span>
<div class="dv" style="top:626px"></div>
<span class="lang" style="top:640px">Deutschñol</span>
<div class="dv" style="top:674px"></div>
<span class="lang" style="top:688px">Italiano</span>
<div class="dv" style="top:722px"></div>
<span class="lang" style="top:736px">Việt Nam</span>
<div class="dv" style="top:770px"></div>
<span class="lang" style="top:784px">Bengal</span>
<div class="dv" style="top:818px"></div>
<span class="lang" style="top:832px">Egypt</span>
<div class="dv" style="top:866px"></div>
<span class="lang" style="top:880px">Russia</span>
<div class="dv" style="top:914px"></div>
<span class="lang" style="top:928px">Türkiye</span>
<div class="dv" style="top:962px"></div>
<svg width="0" height="0" style="left:0;top:0"><defs><clipPath id="fc"><circle r="10"/></clipPath></defs></svg>
<svg style="left:1083px;top:256px" width="22" height="22" viewBox="-11 -11 22 22"><circle r="10.800" fill="#e4ecff"/><g clip-path="url(#fc)"><rect x="-10" y="-10" width="20" height="20" fill="#1f3c8c"/><path d="M-10 -10L10 10M10 -10L-10 10" stroke="#fff" stroke-width="3"/><path d="M-10 -10L10 10M10 -10L-10 10" stroke="#d8202c" stroke-width="1"/><path d="M0 -10V10M-10 0H10" stroke="#fff" stroke-width="5.500"/><path d="M0 -10V10M-10 0H10" stroke="#d8202c" stroke-width="3.200"/></g></svg>
<svg style="left:1083px;top:304px" width="22" height="22" viewBox="-11 -11 22 22"><circle r="10.800" fill="#e4ecff"/><g clip-path="url(#fc)"><rect x="-10" y="-10" width="20" height="20" fill="#c8343c"/><rect x="-10" y="-6.5" width="20" height="13" fill="#f4f4f4"/><rect x="-10" y="-3.5" width="20" height="7" fill="#2b2c5a"/></g></svg>
<svg style="left:1083px;top:352px" width="22" height="22" viewBox="-11 -11 22 22"><circle r="10.800" fill="#e4ecff"/><g clip-path="url(#fc)"><rect x="-10" y="-10" width="20" height="20" fill="#ffffff"/><circle r="5" fill="#d0142c"/></g></svg>
<svg style="left:1083px;top:400px" width="22" height="22" viewBox="-11 -11 22 22"><circle r="10.800" fill="#e4ecff"/><g clip-path="url(#fc)"><rect x="-10" y="-10" width="20" height="20" fill="#ffffff"/><path d="M-3.300 0a3.300 3.300 0 0 1 6.600 0z" fill="#cf2038" transform="rotate(25)"/><path d="M-3.300 0a3.300 3.300 0 0 0 6.600 0z" fill="#1f4a9c" transform="rotate(25)"/><g stroke="#222" stroke-width="1"><path d="M-7.500 -4.500l2.500 -3M-6.300 -3.500l2.500 -3M7.500 4.500l-2.500 3M6.300 3.500l-2.500 3M7.500 -4.500l-2.500 -3M6.300 -3.500l-2.500 -3M-7.500 4.500l2.500 3M-6.300 3.500l2.500 3" stroke-dasharray="1.600 0.700"/></g></g></svg>
<svg style="left:1083px;top:448px" width="22" height="22" viewBox="-11 -11 22 22"><circle r="10.800" fill="#e4ecff"/><g clip-path="url(#fc)"><rect x="-10" y="-10" width="20" height="20" fill="#e3242b"/><polygon points="-4.50,-7.10 -3.65,-4.66 -1.08,-4.61 -3.13,-3.06 -2.38,-0.59 -4.50,-2.06 -6.62,-0.59 -5.87,-3.06 -7.92,-4.61 -5.35,-4.66" fill="#ffde2a"/><polygon points="1.24,-7.72 1.23,-6.79 2.10,-6.45 1.21,-6.18 1.16,-5.25 0.62,-6.01 -0.28,-5.77 0.28,-6.52 -0.22,-7.30 0.66,-7.00" fill="#ffde2a"/><polygon points="3.84,-5.20 3.50,-4.33 4.21,-3.71 3.28,-3.76 2.91,-2.90 2.67,-3.80 1.74,-3.89 2.52,-4.39 2.31,-5.30 3.04,-4.72" fill="#ffde2a"/><polygon points="3.00,-2.30 3.31,-1.42 4.24,-1.40 3.49,-0.84 3.76,0.05 3.00,-0.48 2.24,0.05 2.51,-0.84 1.76,-1.40 2.69,-1.42" fill="#ffde2a"/><polygon points="1.24,-0.02 1.23,0.91 2.10,1.25 1.21,1.52 1.16,2.45 0.62,1.69 -0.28,1.93 0.28,1.18 -0.22,0.40 0.66,0.70" fill="#ffde2a"/></g></svg>
<svg style="left:1083px;top:496px" width="22" height="22" viewBox="-11 -11 22 22"><circle r="10.800" fill="#e4ecff"/><g clip-path="url(#fc)"><rect x="-10" y="-10" width="20" height="20" fill="#fe0000"/><rect x="-10" y="-10" width="11" height="10" fill="#1a2fa0"/><polygon points="-4.50,-8.40 -3.70,-6.10 -1.27,-6.05 -3.21,-4.58 -2.50,-2.25 -4.50,-3.64 -6.50,-2.25 -5.79,-4.58 -7.73,-6.05 -5.30,-6.10" fill="#fff"/><circle cx="-4.500" cy="-5" r="1.700" fill="#fff" stroke="#1a2fa0" stroke-width="0.500"/></g></svg>
<svg style="left:1083px;top:544px" width="22" height="22" viewBox="-11 -11 22 22"><circle r="10.800" fill="#e4ecff"/><g clip-path="url(#fc)"><rect x="-10" y="-10" width="6.8" height="20" fill="#26327c"/><rect x="-3.2" y="-10" width="6.4" height="20" fill="#ffffff"/><rect x="3.2" y="-10" width="6.8" height="20" fill="#e0202c"/></g></svg>
<svg style="left:1083px;top:592px" width="22" height="22" viewBox="-11 -11 22 22"><circle r="10.800" fill="#e4ecff"/><g clip-path="url(#fc)"><rect x="-10" y="-10" width="20" height="20" fill="#c8282c"/><rect x="-10" y="-5" width="20" height="10" fill="#fcc41c"/><rect x="-6" y="-2.500" width="4.500" height="4.500" rx="1" fill="#b5572a"/></g></svg>
<svg style="left:1083px;top:640px" width="22" height="22" viewBox="-11 -11 22 22"><circle r="10.800" fill="#e4ecff"/><g clip-path="url(#fc)"><rect x="-10" y="-10" width="20" height="7" fill="#111111"/><rect x="-10" y="-3.3" width="20" height="6.6" fill="#dd1111"/><rect x="-10" y="3.3" width="20" height="7" fill="#ffcc11"/></g></svg>
<svg style="left:1083px;top:688px" width="22" height="22" viewBox="-11 -11 22 22"><circle r="10.800" fill="#e4ecff"/><g clip-path="url(#fc)"><rect x="-10" y="-10" width="6.8" height="20" fill="#129246"/><rect x="-3.2" y="-10" width="6.4" height="20" fill="#ffffff"/><rect x="3.2" y="-10" width="6.8" height="20" fill="#d02a3a"/></g></svg>
<svg style="left:1083px;top:736px" width="22" height="22" viewBox="-11 -11 22 22"><circle r="10.800" fill="#e4ecff"/><g clip-path="url(#fc)"><rect x="-10" y="-10" width="20" height="20" fill="#dc241c"/><polygon points="0.00,-3.50 0.89,-0.93 3.61,-0.87 1.45,0.77 2.23,3.37 0.00,1.82 -2.23,3.37 -1.45,0.77 -3.61,-0.87 -0.89,-0.93" fill="#ffe21c"/></g></svg>
<svg style="left:1083px;top:784px" width="22" height="22" viewBox="-11 -11 22 22"><circle r="10.800" fill="#e4ecff"/><g clip-path="url(#fc)"><rect x="-10" y="-10" width="20" height="20" fill="#128a5e"/><circle cx="0" cy="0" r="4.200" fill="#d8445a"/></g></svg>
<svg style="left:1083px;top:832px" width="22" height="22" viewBox="-11 -11 22 22"><circle r="10.800" fill="#e4ecff"/><g clip-path="url(#fc)"><rect x="-10" y="-10" width="20" height="7" fill="#d8141c"/><rect x="-10" y="-3.3" width="20" height="6.6" fill="#ffffff"/><rect x="-10" y="3.3" width="20" height="7" fill="#111111"/><path d="M-2.500 -1.200h5l-1 2.200h-3z" fill="#e8a030"/></g></svg>
<svg style="left:1083px;top:880px" width="22" height="22" viewBox="-11 -11 22 22"><circle r="10.800" fill="#e4ecff"/><g clip-path="url(#fc)"><rect x="-10" y="-10" width="20" height="7" fill="#f6f6f6"/><rect x="-10" y="-3.3" width="20" height="6.6" fill="#2a4aa8"/><rect x="-10" y="3.3" width="20" height="7" fill="#d0242c"/></g></svg>
<svg style="left:1083px;top:928px" width="22" height="22" viewBox="-11 -11 22 22"><circle r="10.800" fill="#e4ecff"/><g clip-path="url(#fc)"><rect x="-10" y="-10" width="20" height="20" fill="#e30a17"/><circle cx="-1.500" cy="0" r="5" fill="#fff"/><circle cx="0" cy="0" r="4" fill="#e30a17"/><polygon points="3.52,-2.09 4.47,-0.84 5.98,-1.29 5.08,0.00 5.98,1.29 4.47,0.84 3.52,2.09 3.49,0.52 2.00,0.00 3.49,-0.52" fill="#fff"/></g></svg>
<!-- status bar -->
<div style="left:1px;top:1007px;width:1449px;height:20px;background:#555555"></div>
<svg style="left:29px;top:1012px" width="14" height="14" viewBox="0 0 15 15"><circle cx="7.500" cy="7.500" r="6.800" fill="none" stroke="#d8d8d8" stroke-width="1.200"/><circle cx="7.500" cy="5.800" r="2.400" fill="#d8d8d8"/><path d="M3 12.200q0.500-3.600 4.500-3.600t4.500 3.600q-2 1.800-4.500 1.800T3 12.200z" fill="#d8d8d8"/></svg>
<span class="st" style="left:48px">未登录</span>
<svg style="left:144px;top:1012px" width="70" height="14" viewBox="0 0 70 14" fill="none" stroke="#d8d8d8" stroke-width="1.100"><path d="M0.500 2.500h2M0.500 6.500h2M0.500 10.500h2" stroke-width="1.800"/><path d="M4.500 2.500h8M4.500 6.500h8M4.500 10.500h8"/><g transform="translate(26,0)"><rect x="0.500" y="1.500" width="12" height="10"/><path d="M3 4.500l2.300 2L3 8.500M6.500 9.500h3.500"/></g><g transform="translate(51,0)"><path d="M6.500 12.500A6 6 0 1 1 12.500 6M0.500 6.500h8M6.500 0.500v8M6.500 0.500Q3 4 4.200 9.500"/><path d="M7.500 13h6.500q2-0.500 0.500-3-1-0.500-1.800 0Q11.500 7.500 9.500 9q-1 1-0.500 2-2 0.500-1.500 2z" fill="#555"/></g></svg>
<span class="st" style="left:1065px">语法提示库</span>
<span class="st" style="left:1151px">行:41&nbsp;&nbsp; 列:45</span>
<span class="st" style="left:1245px">UTF-8</span>
<span class="st" style="left:1305px">JavaScript</span>
<svg style="left:1380px;top:1010px" width="50" height="16" viewBox="0 0 50 16"><circle cx="7.400" cy="9.800" r="6.200" fill="#fff"/><path d="M7.400 6.500v6M5 10.300l2.400 2.400 2.400-2.400" fill="none" stroke="#555" stroke-width="1.100"/><circle cx="13.500" cy="5.600" r="3.400" fill="#fff"/><circle cx="13.500" cy="5.600" r="2.600" fill="#e81c1c"/><circle cx="13.500" cy="5.600" r="0.800" fill="#f5a040"/><path d="M32 13h12q-1.500-1.500-1.500-4V7q0-4-4.500-4.500Q33.500 3 33.500 7v2q0 2.500-1.500 4zM36.500 14h3l-1.500 1.500z" fill="#b5a57a"/></svg>
</div></div>
</body>
</html>
